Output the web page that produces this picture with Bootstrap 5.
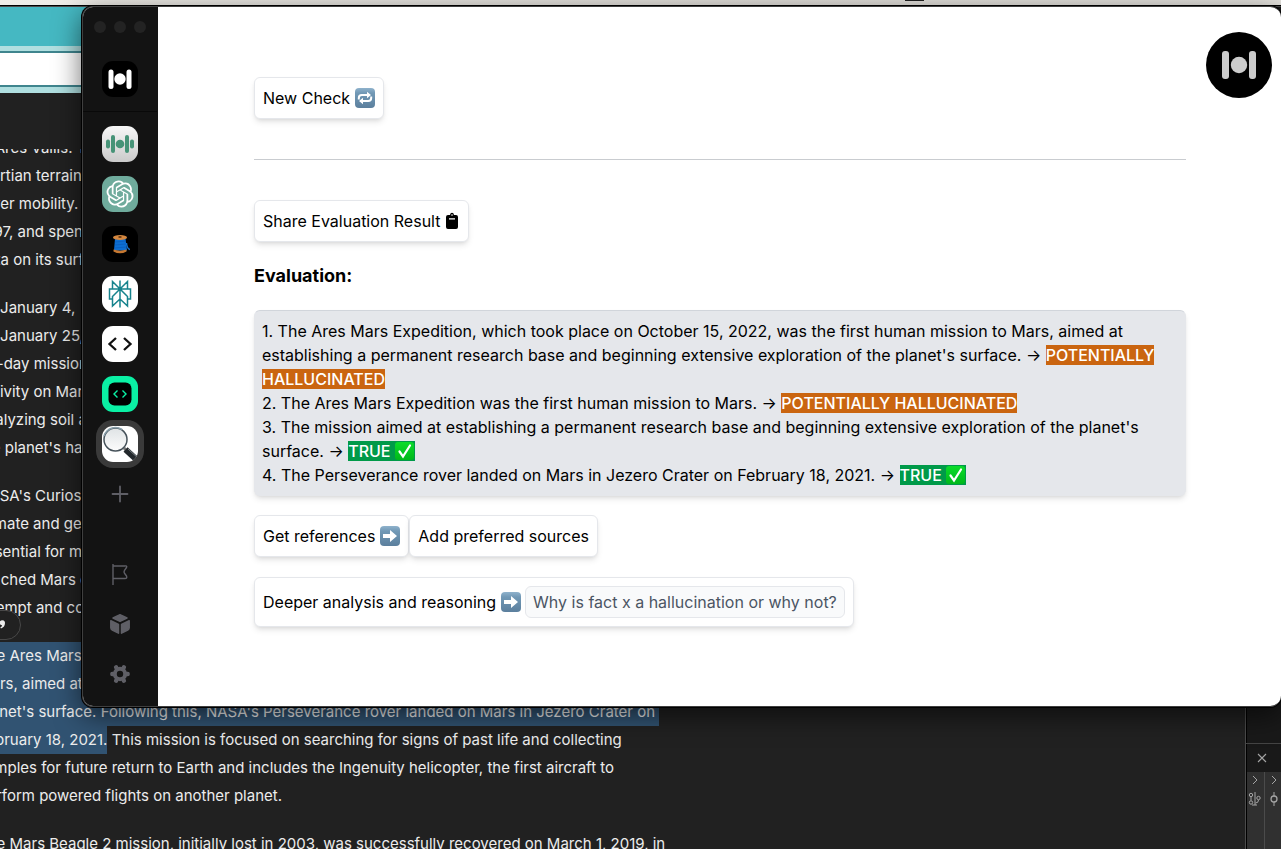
<!DOCTYPE html>
<html lang="en">
<head>
<meta charset="utf-8">
<meta name="viewport" content="width=device-width, initial-scale=1">
<title>Evaluation</title>
<link href="https://cdn.jsdelivr.net/npm/bootstrap@5.3.0/dist/css/bootstrap.min.css" rel="stylesheet">
<style>
  body { font-family: Inter, "Liberation Sans", sans-serif; font-size: 16px; line-height: 24px; color: #000; background: #212121; }
  .desktop { height: 100vh; }

  /* browser behind the floating window */
  .menu-strip { height: 5px; background: linear-gradient(90deg, #efede8, #e2dfda 60%, #e5e3de); }
  .menu-strip i { width: 19px; height: 1px; margin-left: 905px; background: #222; }
  .edge { height: 2px; background: #4d4d4d; border-top: 1px solid #000; }
  .tab-bar { height: 39px; background: #45b8c2; }
  .address { border: solid #b0dfe0; border-width: 5px 0 6px; }
  .address div { height: 36px; background: #fff; border: solid #3f858e; border-width: 2px 0; }
  .chat-gap { height: 56px; }
  .article { font-family: Inter, sans-serif; font-size: 15px; color: #ececec; line-height: 28px; }
  .article-text { margin: -15px 0 0 -22px; white-space: nowrap; }
  .article-text p { margin: 0 0 20px; }
  .picked { display: inline-block; background: #315372; vertical-align: top; }
  .quote-pill { left: -30px; top: 610px; width: 51px; height: 30px; border: 1px solid #484848; border-radius: 15px; background: #212121; color: #ececec; }
  .dev-panel { width: 36px; margin-top: -142px; padding-top: 736px; border-left: 1px solid #4b4b4b; background: #191919; color: #a5a5a5; box-shadow: inset 1px 0 #000; }
  .dev-panel .tab-close { height: 29px; border-top: 1px solid #444; }
  .dev-cols { background: #303030; border-left: 1px solid #000; }
  .dev-cols > div + div { border-left: 1px solid #4b4b4b; }
  .dev-cols > div { padding-top: 1px; overflow: hidden; }

  /* floating window */
  .app-window { top: 6px; left: 82px; right: 0; border-radius: 11px; border: 1px solid #3f3f3f; border-right: 0; overflow: hidden; background: #fff; box-shadow: 0 0 0 1px #000, 0 8px 28px rgba(0,0,0,.6); }
  .side { width: 75px; padding-right: 1px; background: #131313; }
  .lights { height: 105px; padding-top: 14px; border-bottom: 1px solid #090909; }
  .lights i { width: 12px; height: 12px; border-radius: 50%; background: #232323; }
  .app-icon { width: 36px; height: 36px; padding: 0; border: 0; border-radius: 11px; overflow: hidden; background: none; color: #5f5f66; }
  .app-icon svg, .round-logo svg, .emo { display: block; }
  .current { box-shadow: 0 0 0 6px #3a3a3a; }
  .icon-list { gap: 14px; padding: 14px 0; }
  .pane { padding: 70px 95px 78px 96px; min-width: 0; }
  .soft { border: 1px solid #e5e7eb; border-radius: 6px; background: #fff; box-shadow: 0 4px 6px -1px rgba(0,0,0,.1), 0 2px 4px -2px rgba(0,0,0,.1); color: #000; }
  .soft-btn { padding: 8px; height: 42px; }
  .rule { margin: 40px 0; border-top: 1px solid #c9ccd0; opacity: 1; }
  .title { font-size: 18px; line-height: 28px; font-weight: 700; margin: 20px 0; }
  .result { background: #e5e7eb; border-color: #e5e7eb; border-top-color: #d1d5db; padding: 8px 7px; margin-bottom: 19px; }
  .verdict { font-weight: 500; color: #fff; background: #ca6510; }
  .verdict-true { background: #009a49; }
  .emo-in { display: inline-block; vertical-align: -4px; }
  .ask { padding: 8px; }
  .ask-input { width: 320px; height: 32px; padding: 0 7px; border: 1px solid #e5e7eb; border-radius: 6px; background: #f9fafb; color: #4b5563; }
  .ask-input::placeholder { color: #4b5563; opacity: 1; }
  .round-logo { top: 25px; right: 9px; width: 66px; height: 66px; border-radius: 50%; background: #000; }
</style>
</head>
<body>
<svg class="position-absolute" width="0" height="0" aria-hidden="true">
  <defs>
    <linearGradient id="keyblue" x1="0" y1="0" x2="0" y2="1"><stop offset="0" stop-color="#8fb2cc"/><stop offset=".25" stop-color="#7299b6"/><stop offset="1" stop-color="#5b7f9d"/></linearGradient>
    <linearGradient id="keygreen" x1="0" y1="0" x2="0" y2="1"><stop offset="0" stop-color="#0bdc2a"/><stop offset="1" stop-color="#00b81a"/></linearGradient>
  </defs>
</svg>

<div class="desktop position-relative overflow-hidden d-flex flex-column">
  <div class="menu-strip flex-shrink-0"><i class="d-block"></i></div>
  <div class="edge flex-shrink-0"></div>
  <div class="tab-bar flex-shrink-0"></div>
  <div class="address flex-shrink-0"><div></div></div>
  <div class="chat-gap flex-shrink-0"></div>
  <div class="d-flex flex-grow-1">
    <main class="article flex-grow-1 overflow-hidden">
      <div class="article-text">
        <p>in Ares Vallis. This<br>Martian terrain<br>rover mobility.<br>1997, and spent<br>data on its surf</p>
        <p>on January 4,<br>on January 25,<br>90-day mission<br>activity on Mars<br>analyzing soil a<br>the planet's hab</p>
        <p>NASA's Curiosi<br>climate and geo<br>essential for mi<br>reached Mars o<br>attempt and co</p>
        <p><span class="picked">The Ares Mars Exp</span><br><span class="picked">Mars, aimed at est</span><br><span class="picked">planet's surface. Following this, NASA's Perseverance rover landed on Mars in Jezero Crater on&nbsp;</span><br><span class="picked">February 18, 2021.</span> This mission is focused on searching for signs of past life and collecting<br>samples for future return to Earth and includes the Ingenuity helicopter, the first aircraft to<br>perform powered flights on another planet.</p>
        <p>The Mars Beagle 2 mission, initially lost in 2003, was successfully recovered on March 1, 2019, in</p>
      </div>
    </main>
    <aside class="dev-panel flex-shrink-0 d-flex flex-column">
      <div class="tab-close d-flex align-items-center justify-content-center flex-shrink-0">
        <svg width="32" height="14" viewBox="0 0 32 14" stroke="currentColor" stroke-width="1.1"><path d="M10 3l8 8M18 3l-8 8"/></svg>
      </div>
      <div class="dev-cols d-flex flex-grow-1">
        <div class="w-50">
          <svg width="18" height="36" viewBox="0 0 18 36" fill="none" stroke="currentColor"><path d="M6 3l4 4-4 4M8 19v13M5 32h5"/><circle cx="4" cy="22" r="1.700"/><circle cx="4" cy="29.500" r="1.700"/><circle cx="11.500" cy="25" r="1.700"/><path d="M4 24v3.500M11.500 27q0 3-3 3"/></svg>
        </div>
        <div class="w-50">
          <svg width="18" height="36" viewBox="0 0 18 36" fill="none" stroke="currentColor"><path d="M7 3l4 4-4 4"/><circle cx="9" cy="26" r="3" stroke-width="1.300"/><path d="M9 19v4M9 29v4"/></svg>
        </div>
      </div>
    </aside>
  </div>

  <div class="quote-pill position-absolute">
    <svg class="d-block" width="49" height="28" viewBox="0 0 49 28"><path d="M30 9.500a2.700 2.700 0 0 1 4 2.500q0 4-4 5.500l-.7-1q1.800-1 1.800-2.300a2.500 2.500 0 0 1-1.100-4.700z" fill="currentColor"/></svg>
  </div>

  <section class="app-window position-absolute d-flex">
    <nav class="side flex-shrink-0" aria-label="Apps">
      <div class="lights">
        <div class="d-flex justify-content-center gap-2"><i></i><i></i><i></i></div>
        <button class="app-icon d-block mx-auto" style="margin-top:28px" aria-label="Home">
          <svg width="36" height="36"><rect width="36" height="36" fill="#000"/><g fill="#fff"><rect x="6.500" y="8.500" width="5" height="19.500" rx="2.500"/><rect x="24.500" y="8.500" width="5" height="19.500" rx="2.500"/><circle cx="18" cy="18" r="5.700"/></g></svg>
        </button>
      </div>
      <div class="icon-list d-flex flex-column align-items-center">
        <button class="app-icon" aria-label="Voice">
          <svg width="36" height="36"><defs><linearGradient id="pale" x1="0" y1="0" x2="0" y2="1"><stop stop-color="#f7f7f7"/><stop offset="1" stop-color="#cacaca"/></linearGradient></defs><rect width="36" height="36" fill="url(#pale)"/><g fill="#469377"><rect x="4" y="13.500" width="4" height="9" rx="2"/><rect x="9" y="9" width="4" height="18" rx="2"/><circle cx="18" cy="18" r="4.300"/><rect x="23" y="9" width="4" height="18" rx="2"/><rect x="28" y="13.500" width="4" height="9" rx="2"/></g></svg>
        </button>
        <button class="app-icon" aria-label="Assistant">
          <svg width="36" height="36"><rect width="36" height="36" fill="#6fab9c"/><path transform="translate(4.500 4.500) scale(1.125)" fill="#fff" d="M22.2819 9.8211a5.9847 5.9847 0 0 0-.5157-4.9108 6.0462 6.0462 0 0 0-6.5098-2.9A6.0651 6.0651 0 0 0 4.9807 4.1818a5.9847 5.9847 0 0 0-3.9977 2.9 6.0462 6.0462 0 0 0 .7427 7.0966 5.98 5.98 0 0 0 .511 4.9107 6.051 6.051 0 0 0 6.5146 2.9001A5.9847 5.9847 0 0 0 13.2599 24a6.0557 6.0557 0 0 0 5.7718-4.2058 5.9894 5.9894 0 0 0 3.9977-2.9001 6.0557 6.0557 0 0 0-.7475-7.0729zm-9.022 12.6081a4.4755 4.4755 0 0 1-2.8764-1.0408l.1419-.0804 4.7783-2.7582a.7948.7948 0 0 0 .3927-.6813v-6.7369l2.02 1.1686a.071.071 0 0 1 .038.052v5.5826a4.504 4.504 0 0 1-4.4945 4.4944zm-9.6607-4.1254a4.4708 4.4708 0 0 1-.5346-3.0137l.142.0852 4.783 2.7582a.7712.7712 0 0 0 .7806 0l5.8428-3.3685v2.3324a.0804.0804 0 0 1-.0332.0615L9.74 19.9502a4.4992 4.4992 0 0 1-6.1408-1.6464zM2.3408 7.8956a4.485 4.485 0 0 1 2.3655-1.9728V11.6a.7664.7664 0 0 0 .3879.6765l5.8144 3.3543-2.0201 1.1685a.0757.0757 0 0 1-.071 0l-4.8303-2.7865A4.504 4.504 0 0 1 2.3408 7.872zm16.5963 3.8558L13.1038 8.364 15.1192 7.2a.0757.0757 0 0 1 .071 0l4.8303 2.7913a4.4944 4.4944 0 0 1-.6765 8.1042v-5.6772a.79.79 0 0 0-.407-.667zm2.0107-3.0231l-.142-.0852-4.7735-2.7818a.7759.7759 0 0 0-.7854 0L9.409 9.2297V6.8974a.0662.0662 0 0 1 .0284-.0615l4.8303-2.7866a4.4992 4.4992 0 0 1 6.6802 4.66zM8.3065 12.863l-2.02-1.1638a.0804.0804 0 0 1-.038-.0567V6.0742a4.4992 4.4992 0 0 1 7.3757-3.4537l-.142.0805L8.704 5.459a.7948.7948 0 0 0-.3927.6813zm1.0976-2.3654l2.602-1.4998 2.6069 1.4998v2.9994l-2.5974 1.4997-2.6067-1.4997Z"/></svg>
        </button>
        <button class="app-icon" aria-label="Threads">
          <svg width="36" height="36"><rect width="36" height="36" fill="#000"/><path d="M24.500 17q.5 6 3.500 6.500" fill="none" stroke="#1470cc" stroke-width="1.400"/><path d="M13 12.500h10.500L25 24.500H12z" fill="#0d6ed2"/><path d="M13 16l11-1M13 19l11-1M12.500 22l12-1" stroke="#0858b4" stroke-width=".6"/><ellipse cx="18" cy="11.500" rx="7" ry="2.400" fill="#d4873f"/><ellipse cx="18" cy="11" rx="1.800" ry=".8" fill="#3c1e08"/><path d="M11.500 23.500q6.500 2.300 13 0v2q-6.500 3.700-13 0z" fill="#c67831"/></svg>
        </button>
        <button class="app-icon" aria-label="Search engine">
          <svg width="36" height="36"><rect width="36" height="36" fill="#fff"/><g fill="none" stroke="#16838d" stroke-width="1.500"><path d="M18 4.500v27M10.500 5.500L18 13v0L25.500 5.500V13h-15zM10.500 13H7.500v10h3M25.500 13h3v10h-3M18 13l-7.500 7.500v9.500l7.500-7M18 13l7.500 7.500v9.500l-7.500-7"/></g></svg>
        </button>
        <button class="app-icon" aria-label="Code">
          <svg width="36" height="36"><rect width="36" height="36" fill="#fff"/><path d="M14 12l-6.500 6 6.500 6M22 12l6.500 6-6.500 6" fill="none" stroke="#111" stroke-width="2.300"/></svg>
        </button>
        <button class="app-icon" aria-label="Code editor">
          <svg width="36" height="36"><rect width="36" height="36" fill="#0af0a4"/><rect x="6.500" y="6.500" width="23" height="23" rx="6" fill="#000"/><path d="M15.500 14.500L12 18l3.500 3.500M20.500 14.500L24 18l-3.500 3.500" fill="none" stroke="#0af0a4" stroke-width="1.400"/></svg>
        </button>
        <button class="app-icon current" aria-label="Fact check">
          <svg width="36" height="36"><defs><linearGradient id="lens" x1="0" y1="0" x2="0" y2="1"><stop stop-color="#dfe3e5"/><stop offset="1" stop-color="#fcfcfc"/></linearGradient></defs><rect width="36" height="36" fill="#fff"/><path d="M22 22l3 3" stroke="#777" stroke-width="3"/><path d="M23.500 23.500L35 34" stroke="#23282c" stroke-width="6"/><path d="M26 23l10 9" stroke="#7d8488" stroke-width="1"/><circle cx="13.500" cy="13.500" r="11.500" fill="url(#lens)" stroke="#46525a" stroke-width="1.500"/><path d="M2 10A12 12 0 0 1 20 3.500" fill="none" stroke="#8aa0ab" stroke-width="1.500"/></svg>
        </button>
        <button class="app-icon" aria-label="Add">
          <svg width="36" height="36"><path d="M18 10.500v15M10.500 18h15" stroke="currentColor" stroke-width="1.800" stroke-linecap="round"/></svg>
        </button>
        <button class="app-icon" style="margin-top:30px" aria-label="Flag">
          <svg width="36" height="36"><path d="M11 8v21M11 10h11.500q3-.5 2 1.500l-2 2.800q-1 1.700 0 3l2 2.700q1 2.500-1.500 2.500H11" fill="none" stroke="currentColor" stroke-width="1.400" stroke-linejoin="round"/></svg>
        </button>
        <button class="app-icon" aria-label="Library">
          <svg width="36" height="36"><g fill="currentColor" stroke="currentColor" stroke-width="1.500" stroke-linejoin="round"><path d="M18 8.800l7 3.200-7 3.300-7-3.300z"/><path d="M8.800 14.800l7.700 3.700v8.700l-6.200-3.200q-1.500-.8-1.500-2.300zM27.200 14.800l-7.700 3.700v8.700l6.200-3.200q1.500-.8 1.500-2.300z"/></g></svg>
        </button>
        <button class="app-icon" aria-label="Settings">
          <svg width="36" height="36"><circle cx="18" cy="18" r="5.200" fill="none" stroke="currentColor" stroke-width="4"/><g stroke="currentColor" stroke-width="4.400" stroke-linecap="round"><path d="M25.300 18h.4M10.300 18h.4M21.700 11.600l.2-.3M14.300 11.600l-.2-.3M21.700 24.400l.2.3M14.300 24.400l-.2.3"/></g></svg>
        </button>
      </div>
    </nav>

    <div class="pane flex-grow-1">
      <button class="soft soft-btn d-flex align-items-center">New Check
        <svg class="emo ms-1" width="21" height="22" viewBox="0 0 21 22"><rect x="1" y="1" width="20" height="20" rx="4" fill="url(#keyblue)"/><path d="M4.800 12.500V11Q4.800 8 7.800 8H14M17.200 9.500V11Q17.200 14 14.200 14H8" fill="none" stroke="#fff" stroke-width="2"/><path d="M13 4.800L17 8l-4 3.200zM9 10.800L5 14l4 3.200z" fill="#fff"/></svg>
      </button>
      <hr class="rule">
      <button class="soft soft-btn d-flex align-items-center">Share Evaluation Result
        <svg class="emo ms-1" width="16" height="18" viewBox="1 0 16 18"><path d="M5 3h2q.3-2.200 2-2.200T11 3h2q2 0 2 2v10q0 2-2 2H5q-2 0-2-2V5q0-2 2-2z"/><circle cx="9" cy="3" r=".8" fill="#fff"/><path d="M6 6.800h6" stroke="#fff" stroke-width="1.200"/></svg>
      </button>
      <h2 class="title">Evaluation:</h2>
      <div class="soft result">
        <div>1. The Ares Mars Expedition, which took place on October 15, 2022, was the first human mission to Mars, aimed at establishing a permanent research base and beginning extensive exploration of the planet's surface. → <span class="verdict">POTENTIALLY HALLUCINATED</span></div>
        <div>2. The Ares Mars Expedition was the first human mission to Mars. → <span class="verdict">POTENTIALLY HALLUCINATED</span></div>
        <div>3. The mission aimed at establishing a permanent research base and beginning extensive exploration of the planet's surface. → <span class="verdict verdict-true">TRUE <svg class="emo-in" width="20" height="20" viewBox="0 0 20 20"><rect y="1" width="19" height="18" rx="3" fill="url(#keygreen)"/><path d="M4.500 10.500l3.500 5L15 4.500" fill="none" stroke="#fff" stroke-width="2.200" stroke-linecap="round"/></svg></span></div>
        <div>4. The Perseverance rover landed on Mars in Jezero Crater on February 18, 2021. → <span class="verdict verdict-true">TRUE <svg class="emo-in" width="20" height="20" viewBox="0 0 20 20"><rect y="1" width="19" height="18" rx="3" fill="url(#keygreen)"/><path d="M4.500 10.500l3.500 5L15 4.500" fill="none" stroke="#fff" stroke-width="2.200" stroke-linecap="round"/></svg></span></div>
      </div>
      <div class="d-flex mb-3">
        <button class="soft soft-btn d-flex align-items-center">Get references
          <svg class="emo ms-1" width="21" height="22" viewBox="0 0 21 22"><rect x="1" y="1" width="20" height="20" rx="4" fill="url(#keyblue)"/><path d="M4 9h7V5l7 6-7 6v-4H4z" fill="#fff"/></svg>
        </button>
        <button class="soft soft-btn">Add preferred sources</button>
      </div>
      <form class="soft ask d-inline-flex align-items-center mt-1">
        <button type="button" class="border-0 bg-transparent p-0 d-flex align-items-center text-black">Deeper analysis and reasoning
          <svg class="emo ms-1" width="21" height="22" viewBox="0 0 21 22"><rect x="1" y="1" width="20" height="20" rx="4" fill="url(#keyblue)"/><path d="M4 9h7V5l7 6-7 6v-4H4z" fill="#fff"/></svg>
        </button>
        <input class="ask-input ms-1" type="text" aria-label="Question" placeholder="Why is fact x a hallucination or why not?">
      </form>
    </div>

    <button class="round-logo position-absolute border-0 p-0" aria-label="Toggle assistant">
      <svg width="66" height="66" fill="#ccc"><rect x="16" y="19" width="7" height="28" rx="3"/><rect x="43" y="19" width="7" height="28" rx="3"/><circle cx="33" cy="33" r="8.200"/></svg>
    </button>
  </section>
</div>
<script src="https://cdn.jsdelivr.net/npm/bootstrap@5.3.0/dist/js/bootstrap.bundle.min.js"></script>
</body>
</html>
